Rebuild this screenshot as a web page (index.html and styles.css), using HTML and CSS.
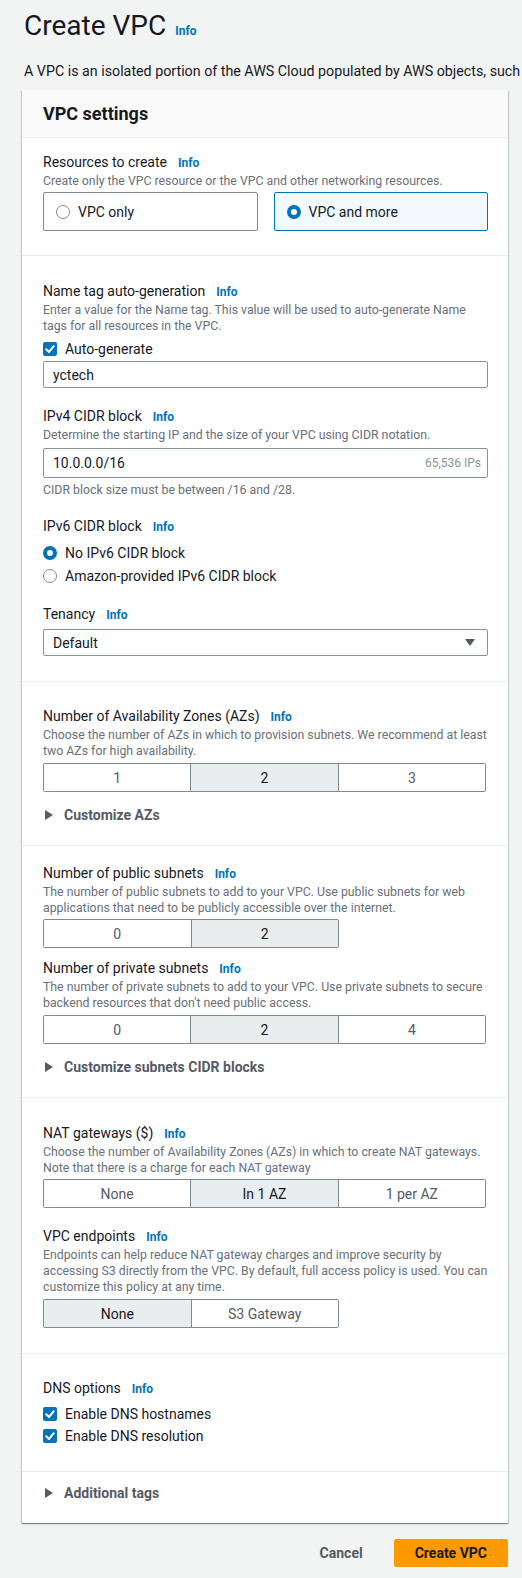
FILE: index.html
```html
<!DOCTYPE html>
<html lang="en">
<head>
<meta charset="utf-8">
<title>Create VPC</title>
<link rel="stylesheet" href="styles.css">
</head>
<body>
<main class="page">
  <h1 class="title">Create VPC<a class="info info-title">Info</a></h1>
  <p class="lead">A VPC is an isolated portion of the AWS Cloud populated by AWS objects, such as Amazon EC2 instances.</p>

  <section class="card">
    <header class="card-head"><h2>VPC settings</h2></header>

    <div class="sec sec-1">
      <div class="label">Resources to create<a class="info">Info</a></div>
      <div class="desc">Create only the VPC resource or the VPC and other networking resources.</div>
      <div class="tiles">
        <div class="tile"><span class="radio"></span>VPC only</div>
        <div class="tile tile-on"><span class="radio radio-on"></span>VPC and more</div>
      </div>
    </div>

    <div class="sec sec-2">
      <div class="label">Name tag auto-generation<a class="info">Info</a></div>
      <div class="desc">Enter a value for the Name tag. This value will be used to auto-generate Name<br>tags for all resources in the VPC.</div>
      <div class="check-row m5"><span class="checkbox"><svg viewBox="0 0 14 14" width="14" height="14"><path d="M3.2 7.2 L6 10 L10.8 4.2" fill="none" stroke="#fff" stroke-width="2" stroke-linecap="round" stroke-linejoin="round"/></svg></span>Auto-generate</div>
      <div class="input input-27 m2">yctech</div>

      <div class="label m18">IPv4 CIDR block<a class="info">Info</a></div>
      <div class="desc">Determine the starting IP and the size of your VPC using CIDR notation.</div>
      <div class="input input-30 m5"><span>10.0.0.0/16</span><span class="suffix">65,536 IPs</span></div>
      <div class="desc m4">CIDR block size must be between /16 and /28.</div>

      <div class="label m18">IPv6 CIDR block<a class="info">Info</a></div>
      <div class="radio-list m5">
        <div class="radio-row"><span class="radio radio-on"></span>No IPv6 CIDR block</div>
        <div class="radio-row"><span class="radio"></span>Amazon-provided IPv6 CIDR block</div>
      </div>

      <div class="label m17">Tenancy<a class="info">Info</a></div>
      <div class="input input-27 select m5"><span>Default</span><span class="caret-down"></span></div>
    </div>

    <div class="sec sec-3">
      <div class="label">Number of Availability Zones (AZs)<a class="info">Info</a></div>
      <div class="desc">Choose the number of AZs in which to provision subnets. We recommend at least<br>two AZs for high availability.</div>
      <div class="seg seg-3 m4">
        <div class="seg-item">1</div>
        <div class="seg-item seg-on">2</div>
        <div class="seg-item">3</div>
      </div>
      <div class="expander m13"><span class="caret-right"></span>Customize AZs</div>
    </div>

    <div class="sec sec-4">
      <div class="label">Number of public subnets<a class="info">Info</a></div>
      <div class="desc">The number of public subnets to add to your VPC. Use public subnets for web<br>applications that need to be publicly accessible over the internet.</div>
      <div class="seg seg-2 m3">
        <div class="seg-item">0</div>
        <div class="seg-item seg-on">2</div>
      </div>

      <div class="label m10">Number of private subnets<a class="info">Info</a></div>
      <div class="desc">The number of private subnets to add to your VPC. Use private subnets to secure<br>backend resources that don't need public access.</div>
      <div class="seg seg-3 m4">
        <div class="seg-item">0</div>
        <div class="seg-item seg-on">2</div>
        <div class="seg-item">4</div>
      </div>
      <div class="expander m13"><span class="caret-right"></span>Customize subnets CIDR blocks</div>
    </div>

    <div class="sec sec-5">
      <div class="label">NAT gateways ($)<a class="info">Info</a></div>
      <div class="desc">Choose the number of Availability Zones (AZs) in which to create NAT gateways.<br>Note that there is a charge for each NAT gateway</div>
      <div class="seg seg-3 m3">
        <div class="seg-item">None</div>
        <div class="seg-item seg-on">In 1 AZ</div>
        <div class="seg-item">1 per AZ</div>
      </div>

      <div class="label m18">VPC endpoints<a class="info">Info</a></div>
      <div class="desc">Endpoints can help reduce NAT gateway charges and improve security by<br>accessing S3 directly from the VPC. By default, full access policy is used. You can<br>customize this policy at any time.</div>
      <div class="seg seg-2 m4">
        <div class="seg-item seg-on">None</div>
        <div class="seg-item">S3 Gateway</div>
      </div>
    </div>

    <div class="sec sec-6">
      <div class="label">DNS options<a class="info">Info</a></div>
      <div class="check-list m5">
        <div class="check-row r22"><span class="checkbox"><svg viewBox="0 0 14 14" width="14" height="14"><path d="M3.2 7.2 L6 10 L10.8 4.2" fill="none" stroke="#fff" stroke-width="2" stroke-linecap="round" stroke-linejoin="round"/></svg></span>Enable DNS hostnames</div>
        <div class="check-row r22"><span class="checkbox"><svg viewBox="0 0 14 14" width="14" height="14"><path d="M3.2 7.2 L6 10 L10.8 4.2" fill="none" stroke="#fff" stroke-width="2" stroke-linecap="round" stroke-linejoin="round"/></svg></span>Enable DNS resolution</div>
      </div>
    </div>

    <div class="sec sec-7">
      <div class="expander"><span class="caret-right"></span>Additional tags</div>
    </div>
  </section>

  <footer class="actions">
    <button class="btn btn-link">Cancel</button>
    <button class="btn btn-primary">Create VPC</button>
  </footer>
</main>
</body>
</html>
```

FILE: styles.css
```css
* { box-sizing: border-box; }

html, body {
  margin: 0;
  padding: 0;
}

body {
  background: #f2f3f3;
  color: #16191f;
  font-family: Roboto, "Liberation Sans", Arial, sans-serif;
  font-size: 14px;
  overflow: hidden;
}

.page {
  padding: 8px 14px 0 22px;
}

.title {
  margin: 0 0 0 2px;
  font-size: 28px;
  font-weight: 400;
  line-height: 36px;
  white-space: nowrap;
}

.info {
  color: #0073bb;
  font-size: 12px;
  font-weight: 700;
  line-height: 1;
  margin-left: 11px;
  cursor: pointer;
}

.info-title {
  margin-left: 9px;
}

.lead {
  margin: 17px 0 0 2px;
  font-size: 14.25px;
  line-height: 20px;
  white-space: nowrap;
}

.card {
  margin-top: 9px;
  background: #fff;
  box-shadow: 0 1px 1px 0 rgba(0, 28, 36, 0.3), 1px 1px 1px 0 rgba(0, 28, 36, 0.15), -1px 1px 1px 0 rgba(0, 28, 36, 0.15);
}

.card-head {
  height: 48px;
  background: #fafafa;
  border-bottom: 1px solid #eaeded;
  padding: 0 20px 0 21px;
}

.card-head h2 {
  margin: 0;
  font-size: 18px;
  font-weight: 700;
  line-height: 47px;
}

.sec {
  padding: 25px 20px 24px 21px;
  border-bottom: 1px solid #eaeded;
}

.sec-1 { padding-top: 14px; padding-bottom: 24px; }
.sec-2 { padding-top: 25px; padding-bottom: 25px; }
.sec-3 { padding-top: 24px; padding-bottom: 20px; }
.sec-4 { padding-top: 17px; padding-bottom: 20px; }
.sec-5 { padding-top: 25px; padding-bottom: 25px; }
.sec-6 { padding-top: 24px; padding-bottom: 24px; }
.sec-7 { padding-top: 11px; padding-bottom: 20px; border-bottom: 0; }

.label {
  font-size: 14px;
  line-height: 20px;
  white-space: nowrap;
}

.desc {
  margin-top: 1px;
  font-size: 12.3px;
  line-height: 16px;
  color: #687078;
  white-space: nowrap;
}

.m2 { margin-top: 2px; }
.m3 { margin-top: 3px; }
.m4 { margin-top: 4px; }
.m5 { margin-top: 5px; }
.m10 { margin-top: 10px; }
.m13 { margin-top: 13px; }
.m17 { margin-top: 17px; }
.m18 { margin-top: 18px; }

/* Tiles */
.tiles {
  margin-top: 3px;
  display: grid;
  grid-template-columns: 1fr 1fr;
  gap: 16px;
}

.tile {
  height: 39px;
  display: flex;
  align-items: center;
  gap: 8px;
  padding-left: 12px;
  border: 1px solid #7d8998;
  border-radius: 2px;
  font-size: 14px;
}

.tile-on {
  border-color: #0073bb;
  background: #f1faff;
}

/* Radios and checkboxes */
.radio {
  width: 14px;
  height: 14px;
  flex: none;
  border-radius: 50%;
  border: 1.5px solid #7d8998;
  background: #fff;
}

.radio-on {
  border: 4px solid #0073bb;
}

.radio-row {
  height: 23px;
  display: flex;
  align-items: center;
  gap: 8px;
  font-size: 14px;
}

.check-row {
  height: 20px;
  display: flex;
  align-items: center;
  gap: 8px;
  font-size: 14px;
}

.check-row.r22 { height: 22px; }

.checkbox {
  width: 14px;
  height: 14px;
  flex: none;
  border-radius: 2px;
  background: #0073bb;
  display: flex;
}

/* Inputs */
.input {
  display: flex;
  align-items: center;
  justify-content: space-between;
  border: 1px solid #879596;
  border-radius: 2px;
  padding: 0 6px 0 9px;
  font-size: 14px;
  background: #fff;
}

.input-27 { height: 27px; }
.input-30 { height: 30px; }

.suffix {
  font-size: 12px;
  color: #879596;
}

.select {
  padding-right: 12px;
}

.caret-down {
  width: 0;
  height: 0;
  border-left: 5px solid transparent;
  border-right: 5px solid transparent;
  border-top: 7px solid #545b64;
}

/* Segmented control */
.seg {
  display: flex;
  height: 29px;
  border: 1px solid #7d8998;
  border-radius: 2px;
  overflow: hidden;
}

.seg-3 { width: 443px; }
.seg-2 { width: 296px; }

.seg-item {
  flex: 1 1 0;
  display: flex;
  align-items: center;
  justify-content: center;
  font-size: 14px;
  color: #545b64;
  background: #fff;
}

.seg-item + .seg-item {
  border-left: 1px solid #7d8998;
}

.seg-on {
  background: #eaeded;
  color: #16191f;
}

/* Expanders */
.expander {
  display: flex;
  align-items: center;
  height: 20px;
  font-size: 14px;
  font-weight: 700;
  color: #545b64;
}

.caret-right {
  width: 0;
  height: 0;
  margin-left: 2px;
  margin-right: 11px;
  border-top: 5px solid transparent;
  border-bottom: 5px solid transparent;
  border-left: 8px solid #545b64;
}

/* Footer actions */
.actions {
  margin-top: 16px;
  display: flex;
  justify-content: flex-end;
  gap: 10px;
}

.btn {
  height: 28px;
  font-family: inherit;
  font-size: 14px;
  font-weight: 700;
  border-radius: 2px;
  padding: 0 20px;
  cursor: pointer;
}

.btn-link {
  background: transparent;
  border: 1px solid transparent;
  color: #545b64;
}

.btn-primary {
  background: #ff9900;
  border: 1px solid #ff9900;
  color: #16191f;
}
```
